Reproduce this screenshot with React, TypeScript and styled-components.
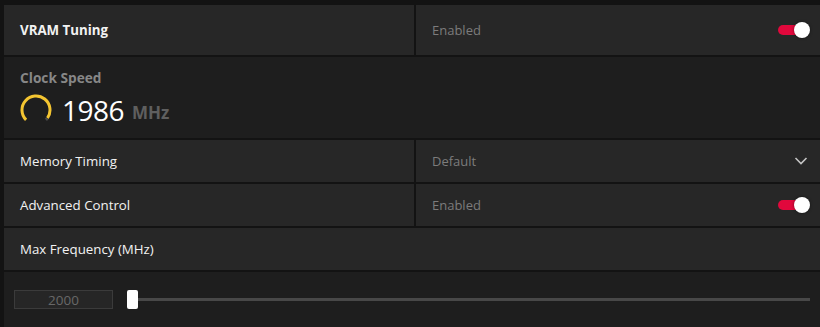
import React from 'react';
import styled, { createGlobalStyle } from 'styled-components';

const GlobalStyle = createGlobalStyle`
    html, body {
        margin: 0;
        padding: 0;
        background: #131313;
        font-family: 'Open Sans', 'Noto Sans', sans-serif;
        overflow: hidden;
    }
`;

const Page = styled.div`
    width: 820px;
    height: 327px;
    box-sizing: border-box;
    padding: 5px 0 0 4px;
    display: flex;
    flex-direction: column;
    gap: 2px;
    background: #131313;
`;

const SplitRow = styled.div<{ $height: number }>`
    height: ${(p) => p.$height}px;
    display: grid;
    grid-template-columns: 410px 1fr;
    gap: 2px;
    flex-shrink: 0;
`;

const Cell = styled.div`
    background: #272727;
    display: flex;
    align-items: center;
    justify-content: space-between;
    padding: 0 10px 0 16px;
`;

const Label = styled.span<{ $bold?: boolean }>`
    color: #f2f2f2;
    font-size: 13.3px;
    font-weight: ${(p) => (p.$bold ? 700 : 400)};
`;

const Value = styled.span`
    color: #7c7c7c;
    font-size: 13px;
`;

const FullRow = styled.div<{ $height: number }>`
    height: ${(p) => p.$height}px;
    flex-shrink: 0;
    background: #272727;
    display: flex;
    align-items: center;
    padding: 0 16px;
`;

const ClockBlock = styled.div`
    height: 81px;
    flex-shrink: 0;
    background: #1e1e1e;
    padding: 11px 16px 0;
    box-sizing: border-box;
`;

const ClockTitle = styled.div`
    color: #878787;
    font-size: 13.7px;
    font-weight: 700;
`;

const Reading = styled.div`
    display: flex;
    align-items: center;
    gap: 10px;
    margin-top: 4px;
`;

const Number = styled.span`
    color: #ffffff;
    font-size: 28px;
    font-weight: 400;
    letter-spacing: -0.5px;
`;

const Unit = styled.span`
    color: #5f5f5f;
    font-size: 17px;
    font-weight: 700;
    margin-left: -2px;
    margin-top: 5px;
`;

const Toggle = styled.div`
    position: relative;
    width: 32px;
    height: 16px;
`;

const Track = styled.div`
    position: absolute;
    left: 0;
    top: 3px;
    width: 26px;
    height: 10px;
    border-radius: 5px;
    background: #e1083c;
`;

const Knob = styled.div`
    position: absolute;
    right: 0;
    top: 0;
    width: 16px;
    height: 16px;
    border-radius: 50%;
    background: #ffffff;
    box-shadow: 0 0 3px rgba(0, 0, 0, 0.5);
`;

const SliderRow = styled.div`
    flex: 1;
    background: #1e1e1e;
    padding: 0 10px 0 10px;
    display: flex;
    align-items: center;
    gap: 14px;
`;

const NumberBox = styled.div`
    width: 99px;
    height: 19px;
    box-sizing: border-box;
    border: 1px solid #3b3b3b;
    background: #262626;
    color: #686868;
    font-size: 13.5px;
    display: flex;
    align-items: center;
    justify-content: center;
`;

const Slider = styled.div`
    flex: 1;
    display: flex;
    align-items: center;
`;

const Thumb = styled.div`
    width: 11px;
    height: 19px;
    border-radius: 2px;
    background: #ffffff;
    flex-shrink: 0;
`;

const Rail = styled.div`
    flex: 1;
    height: 3px;
    background: #484848;
`;

const Gauge = () => (
    <svg width="32" height="32" viewBox="0 0 32 32">
        <path
            d="M6.1 25.9 A14 14 0 1 1 27.4 24.1"
            fill="none"
            stroke="#f4c531"
            strokeWidth="3"
        />
        <path
            d="M27.4 24.1 A14 14 0 0 1 25.9 25.9"
            fill="none"
            stroke="#4a4a4a"
            strokeWidth="3"
        />
    </svg>
);

const Chevron = () => (
    <svg width="14" height="10" viewBox="0 0 14 10" style={{ marginRight: 2 }}>
        <path d="M1.5 2 L7 7.5 L12.5 2" fill="none" stroke="#c4c4c4" strokeWidth="1.6" />
    </svg>
);

const App = () => {
    return (
        <>
            <GlobalStyle />
            <Page>
                <SplitRow $height={50}>
                    <Cell>
                        <Label $bold>VRAM Tuning</Label>
                    </Cell>
                    <Cell>
                        <Value>Enabled</Value>
                        <Toggle>
                            <Track />
                            <Knob />
                        </Toggle>
                    </Cell>
                </SplitRow>
                <ClockBlock>
                    <ClockTitle>Clock Speed</ClockTitle>
                    <Reading>
                        <Gauge />
                        <Number>1986</Number>
                        <Unit>MHz</Unit>
                    </Reading>
                </ClockBlock>
                <SplitRow $height={42}>
                    <Cell>
                        <Label>Memory Timing</Label>
                    </Cell>
                    <Cell>
                        <Value>Default</Value>
                        <Chevron />
                    </Cell>
                </SplitRow>
                <SplitRow $height={42}>
                    <Cell>
                        <Label>Advanced Control</Label>
                    </Cell>
                    <Cell>
                        <Value>Enabled</Value>
                        <Toggle>
                            <Track />
                            <Knob />
                        </Toggle>
                    </Cell>
                </SplitRow>
                <FullRow $height={42}>
                    <Label>Max Frequency (MHz)</Label>
                </FullRow>
                <SliderRow>
                    <NumberBox>2000</NumberBox>
                    <Slider>
                        <Thumb />
                        <Rail />
                    </Slider>
                </SliderRow>
            </Page>
        </>
    );
};

export default App;
